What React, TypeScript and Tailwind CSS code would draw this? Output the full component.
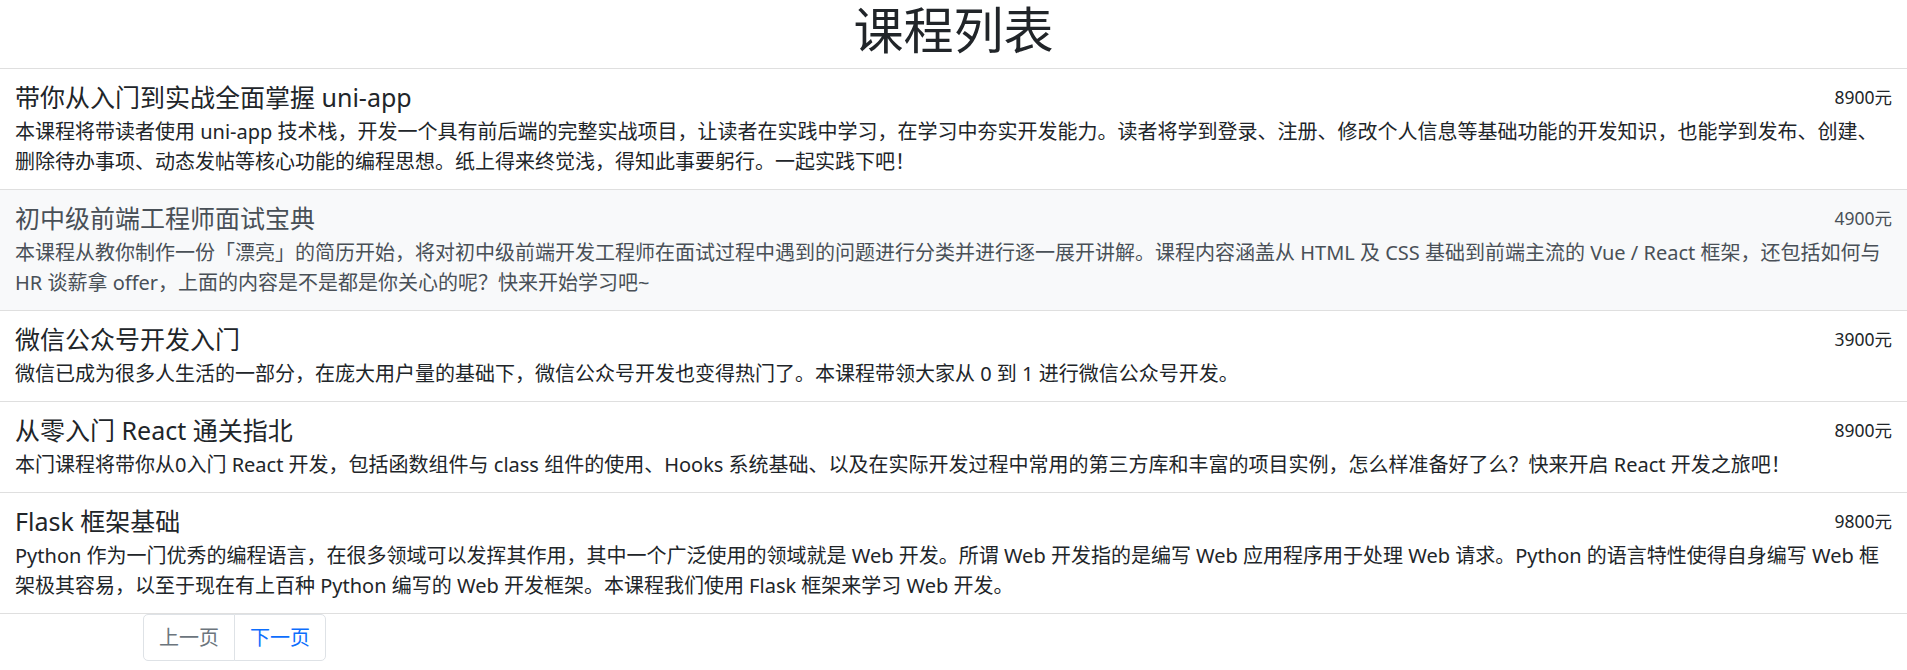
import React from "react";

type Course = {
  title: string;
  price: number;
  desc: string;
};

const courses: Course[] = [
  {
    title: "带你从入门到实战全面掌握 uni-app",
    price: 8900,
    desc: "本课程将带读者使用 uni-app 技术栈，开发一个具有前后端的完整实战项目，让读者在实践中学习，在学习中夯实开发能力。读者将学到登录、注册、修改个人信息等基础功能的开发知识，也能学到发布、创建、删除待办事项、动态发帖等核心功能的编程思想。纸上得来终觉浅，得知此事要躬行。一起实践下吧！",
  },
  {
    title: "初中级前端工程师面试宝典",
    price: 4900,
    desc: "本课程从教你制作一份「漂亮」的简历开始，将对初中级前端开发工程师在面试过程中遇到的问题进行分类并进行逐一展开讲解。课程内容涵盖从 HTML 及 CSS 基础到前端主流的 Vue / React 框架，还包括如何与 HR 谈薪拿 offer，上面的内容是不是都是你关心的呢？快来开始学习吧~",
  },
  {
    title: "微信公众号开发入门",
    price: 3900,
    desc: "微信已成为很多人生活的一部分，在庞大用户量的基础下，微信公众号开发也变得热门了。本课程带领大家从 0 到 1 进行微信公众号开发。",
  },
  {
    title: "从零入门 React 通关指北",
    price: 8900,
    desc: "本门课程将带你从0入门 React 开发，包括函数组件与 class 组件的使用、Hooks 系统基础、以及在实际开发过程中常用的第三方库和丰富的项目实例，怎么样准备好了么？快来开启 React 开发之旅吧！",
  },
  {
    title: "Flask 框架基础",
    price: 9800,
    desc: "Python 作为一门优秀的编程语言，在很多领域可以发挥其作用，其中一个广泛使用的领域就是 Web 开发。所谓 Web 开发指的是编写 Web 应用程序用于处理 Web 请求。Python 的语言特性使得自身编写 Web 框架极其容易，以至于现在有上百种 Python 编写的 Web 开发框架。本课程我们使用 Flask 框架来学习 Web 开发。",
  },
];

function CourseItem({ course, active }: { course: Course; active: boolean }) {
  return (
    <div
      className={
        "border-b border-[#dfdfdf] px-[15px] py-[12.5px] " +
        (active ? "bg-[#f8f9fa] text-[#495057]" : "bg-white text-[#212529]")
      }
    >
      <div className="flex w-full justify-between">
        <h5 className="mb-[5px] text-[25px] leading-[30px] font-normal">
          {course.title}
        </h5>
        <small className="text-[17.5px] leading-[30px]">{course.price}元</small>
      </div>
      <p className="text-[20px] leading-[30px]">{course.desc}</p>
    </div>
  );
}

export default function App() {
  return (
    <div
      className="min-h-screen bg-white text-[#212529]"
      style={{ fontFamily: '"Noto Sans", "Noto Sans CJK SC", sans-serif' }}
    >
      <h1 className="pb-[8px] text-center text-[50px] leading-[60px] font-normal">
        课程列表
      </h1>

      {/* course list, second row shown in hover state */}
      <div className="border-t border-[#dfdfdf]">
        {courses.map((c, i) => (
          <CourseItem key={c.title} course={c} active={i === 1} />
        ))}
      </div>

      <nav className="ml-[143px] flex">
        <span className="rounded-l-[5px] border border-[#dee2e6] bg-white px-[15px] py-[7.5px] text-[20px] leading-[30px] text-[#6c757d]">
          上一页
        </span>
        <a
          href="#"
          className="-ml-px rounded-r-[5px] border border-[#dee2e6] bg-white px-[15px] py-[7.5px] text-[20px] leading-[30px] text-[#0d6efd]"
        >
          下一页
        </a>
      </nav>
    </div>
  );
}
